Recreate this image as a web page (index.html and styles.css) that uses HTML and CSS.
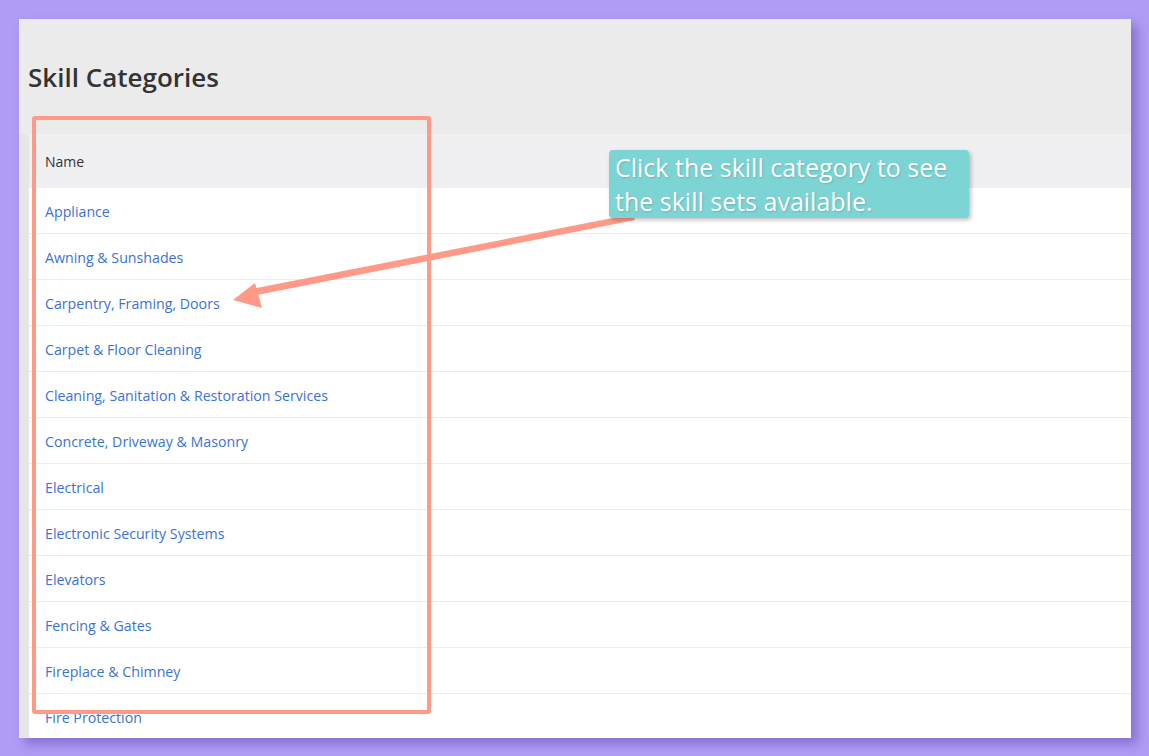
FILE: index.html
```html
<!DOCTYPE html>
<html lang="en">
<head>
    <meta charset="UTF-8">
    <meta name="viewport" content="width=device-width, initial-scale=1.0">
    <title>Skill Categories</title>
    <link rel="stylesheet" href="styles.css">
</head>
<body>
    <div class="shot">
        <div class="page-head">
            <h1>Skill Categories</h1>
        </div>
        <div class="page-body">
            <div class="side-strip"></div>
            <div class="table">
                <div class="table-head">Name</div>
                <div class="row"><a href="#">Appliance</a></div>
                <div class="row"><a href="#">Awning &amp; Sunshades</a></div>
                <div class="row"><a href="#">Carpentry, Framing, Doors</a></div>
                <div class="row"><a href="#">Carpet &amp; Floor Cleaning</a></div>
                <div class="row"><a href="#">Cleaning, Sanitation &amp; Restoration Services</a></div>
                <div class="row"><a href="#">Concrete, Driveway &amp; Masonry</a></div>
                <div class="row"><a href="#">Electrical</a></div>
                <div class="row"><a href="#">Electronic Security Systems</a></div>
                <div class="row"><a href="#">Elevators</a></div>
                <div class="row"><a href="#">Fencing &amp; Gates</a></div>
                <div class="row"><a href="#">Fireplace &amp; Chimney</a></div>
                <div class="row"><a href="#">Fire Protection</a></div>
            </div>
        </div>

        <!-- annotation layer -->
        <div class="highlight-box"></div>
        <svg class="arrow" width="1112" height="719" viewBox="0 0 1112 719">
            <polygon points="614,195 616,201 238,276 233,270" fill="#ff9a88"/>
            <polygon points="214,281 236,264 243,289" fill="#ff9a88"/>
        </svg>
        <div class="callout">Click the skill category to see the skill sets available.</div>
    </div>
</body>
</html>
```

FILE: styles.css
```css
body {
    margin: 0;
    padding: 19px 18px 18px 19px;
    background-color: #b09cf5; /* purple frame */
    font-family: "Open Sans", "Noto Sans", Arial, sans-serif;
}
.shot {
    position: relative;
    width: 1112px;
    height: 719px;
    overflow: hidden;
    background-color: #ffffff;
    box-shadow: 6px 6px 10px rgba(60, 30, 140, 0.35);
    display: flex;
    flex-direction: column;
}
.page-head {
    height: 115px;
    flex-shrink: 0;
    background-color: #ebebeb;
    display: flex;
    align-items: flex-end;
    padding-left: 9px;
}
.page-head h1 {
    margin: 0 0 39px 0;
    font-size: 26px;
    font-weight: 600;
    color: #333333;
}
.page-body {
    flex: 1;
    display: flex;
}
.side-strip {
    width: 10px;
    background-color: #e6e6e6;
}
.table {
    flex: 1;
    display: flex;
    flex-direction: column;
}
.table-head {
    height: 54px;
    flex-shrink: 0;
    display: flex;
    align-items: center;
    padding-left: 16px;
    background-color: #f0f0f2;
    color: #333333;
    font-size: 14px;
}
.row {
    height: 45px;
    flex-shrink: 0;
    display: flex;
    align-items: center;
    padding: 1px 0 0 16px;
    box-sizing: border-box;
    height: 46px;
    border-bottom: 1px solid #ececec;
    font-size: 14.2px;
}
.row a {
    color: #3b72d6;
    text-decoration: none;
}
.highlight-box {
    position: absolute;
    left: 13px;
    top: 97px;
    width: 391px;
    height: 590px;
    border: 4px solid #ff9a88;
    border-radius: 3px;
}
.arrow {
    position: absolute;
    left: 0;
    top: 0;
}
.callout {
    position: absolute;
    left: 590px;
    top: 131px;
    width: 348px;
    height: 68px;
    padding: 0 6px;
    background-color: #7dd4d4;
    border-radius: 4px;
    box-shadow: 2px 2px 4px rgba(0, 0, 0, 0.25);
    color: #ffffff;
    font-size: 25px;
    line-height: 34px;
    text-shadow: 1px 1px 2px rgba(0, 0, 0, 0.15);
}
```
